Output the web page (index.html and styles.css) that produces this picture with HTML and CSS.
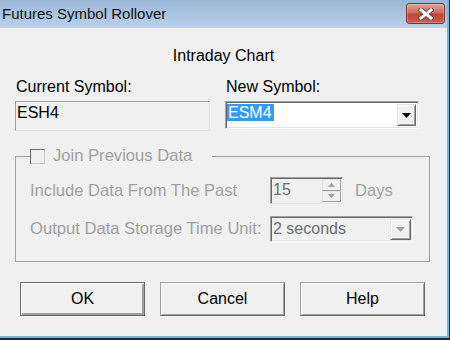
FILE: index.html
```html
<!DOCTYPE html>
<html lang="en">
    <head>
        <meta charset="UTF-8">
        <title>Futures Symbol Rollover</title>
        <link rel="stylesheet" href="styles.css">
    </head>
    <body>
        <div class="window">
            <div class="titlebar">
                <span class="title">Futures Symbol Rollover</span>
                <span class="close">
                    <svg width="16" height="12" viewBox="0 0 16 12">
                        <path d="M3 2 L13 10 M13 2 L3 10" stroke="#5b4646" stroke-width="5" stroke-linecap="square" fill="none"/>
                        <path d="M3 2 L13 10 M13 2 L3 10" stroke="#fff" stroke-width="3" stroke-linecap="square" fill="none"/>
                    </svg>
                </span>
            </div>
            <div class="dialog">
                <div class="heading">Intraday Chart</div>
                <div class="symbols">
                    <div class="field">
                        <div class="label">Current Symbol:</div>
                        <div class="readonly">ESH4</div>
                    </div>
                    <div class="field">
                        <div class="label">New Symbol:</div>
                        <div class="combo">
                            <span class="sel">ESM4</span>
                            <span class="drop">
                                <svg width="9" height="5" viewBox="0 0 9 5"><path d="M0 0 H9 L4.5 5 Z" fill="#000"/></svg>
                            </span>
                        </div>
                    </div>
                </div>
                <fieldset class="group">
                    <legend><span class="check"></span>Join Previous Data</legend>
                    <div class="row">
                        <span class="opt">Include Data From The Past</span>
                        <div class="spin">
                            <span class="val">15</span>
                            <span class="arrows">
                                <span class="arr">
                                    <svg width="7" height="4" viewBox="0 0 7 4"><path d="M0 4 H7 L3.5 0 Z" fill="#a0a0a0"/></svg>
                                </span>
                                <span class="arr">
                                    <svg width="7" height="4" viewBox="0 0 7 4"><path d="M0 0 H7 L3.5 4 Z" fill="#a0a0a0"/></svg>
                                </span>
                            </span>
                        </div>
                        <span class="opt days">Days</span>
                    </div>
                    <div class="row">
                        <span class="opt">Output Data Storage Time Unit:</span>
                        <div class="combo off">
                            <span class="val">2 seconds</span>
                            <span class="drop">
                                <svg width="9" height="5" viewBox="0 0 9 5"><path d="M0 0 H9 L4.5 5 Z" fill="#a0a0a0"/></svg>
                            </span>
                        </div>
                    </div>
                </fieldset>
                <div class="buttons">
                    <button class="btn default">OK</button>
                    <button class="btn">Cancel</button>
                    <button class="btn">Help</button>
                </div>
            </div>
        </div>
    </body>
</html>
```

FILE: styles.css
```css
*{
    margin: 0;
    padding: 0;
    box-sizing: border-box;
}
html, body{
    background: #262a2e;
}
body{
    font-family: "Liberation Sans", Arial, sans-serif;
    font-size: 16px;
    color: #000;
}
.window{
    width: 449px;
    height: 338px;
    background: #f0f0f0;
    border-right: 2px solid #5fbde9;
    border-bottom: 2px solid #5fbde9;
}
.titlebar{
    height: 28px;
    display: flex;
    align-items: center;
    justify-content: space-between;
    background: linear-gradient(#9ab6d6, #bad2eb);
    padding: 0 2px 1px 2px;
}
.title{
    font-size: 15px;
    color: #111;
}
.close{
    width: 39px;
    height: 21px;
    display: flex;
    align-items: center;
    justify-content: center;
    border: 1px solid #7d3430;
    border-radius: 3px;
    background: linear-gradient(#dca496 0%, #cf6c5c 45%, #c04634 55%, #c8614c 100%);
    box-shadow: inset 0 0 0 1px rgba(255,255,255,0.25);
}
.dialog{
    padding: 19px 0 0 15px;
}
.heading{
    line-height: 18px;
    text-align: center;
    padding-right: 15px;
}
.symbols{
    display: grid;
    grid-template-columns: 195px 194px;
    column-gap: 15px;
    margin-top: 13px;
    align-items: start;
}
.label{
    line-height: 18px;
    padding-left: 1px;
    margin-bottom: 5px;
}
.readonly{
    height: 30px;
    border: 1px solid;
    border-color: #a0a0a0 #e3e3e3 #e3e3e3 #a0a0a0;
    padding: 2px 0 0 1px;
    line-height: 18px;
}
.combo{
    height: 28px;
    background: #fff;
    border: 1px solid;
    border-color: #a0a0a0 #fff #fff #a0a0a0;
    box-shadow: inset 1px 1px #696969, inset -1px -1px #e3e3e3;
    display: flex;
    align-items: flex-start;
    padding: 2px 2px 2px 1px;
}
.sel{
    background: #3399ff;
    color: #fff;
    line-height: 17px;
    padding: 0 1px 0 1px;
    border-right: 1px solid #c87a3a;
}
.drop{
    margin-left: auto;
    width: 19px;
    height: 22px;
    display: flex;
    align-items: center;
    justify-content: center;
    background: #f0f0f0;
    border: 1px solid;
    border-color: #e3e3e3 #696969 #696969 #e3e3e3;
    box-shadow: inset 1px 1px #fff, inset -1px -1px #a0a0a0;
}
.group{
    width: 415px;
    margin-top: 17px;
    border: 1px solid #a0a0a0;
    padding: 13px 0 19px 14px;
    color: #a0a0a0;
    font-size: 16.6px;
}
.group legend{
    display: flex;
    align-items: center;
    height: 16px;
    padding-right: 20px;
}
.check{
    width: 15px;
    height: 15px;
    margin-right: 8px;
    border: 1px solid;
    border-color: #6d6d6d #c8c8c8 #c8c8c8 #6d6d6d;
    background: #f0f0f0;
}
.row{
    display: flex;
    align-items: center;
}
.row + .row{
    margin-top: 12px;
}
.opt{
    width: 240px;
    white-space: nowrap;
}
.opt.days{
    width: auto;
    margin-left: 12px;
}
.spin{
    width: 73px;
    height: 27px;
    display: flex;
    border: 1px solid;
    border-color: #a0a0a0 #e3e3e3 #e3e3e3 #a0a0a0;
    box-shadow: inset 1px 1px #696969;
    padding: 1px 1px 1px 2px;
}
.val{
    color: #6d6d6d;
    font-size: 16px;
    line-height: 18px;
    flex: 1;
}
.spin .val{
    padding-top: 2px;
}
.arrows{
    width: 19px;
    display: flex;
    flex-direction: column;
}
.arr{
    flex: 1;
    display: flex;
    align-items: center;
    justify-content: center;
    border: 1px solid;
    border-color: #e3e3e3 #a0a0a0 #a0a0a0 #e3e3e3;
    background: #f0f0f0;
}
.combo.off{
    width: 143px;
    height: 26px;
    background: #f0f0f0;
    padding: 1px 1px 1px 2px;
    align-items: center;
}
.combo.off .drop{
    width: 21px;
    height: 21px;
}
.buttons{
    display: flex;
    gap: 15px;
    margin: 20px 0 0 5px;
}
.btn{
    width: 125px;
    height: 34px;
    font-family: "Liberation Sans", Arial, sans-serif;
    font-size: 16px;
    color: #000;
    background: #f0f0f0;
    border: 1px solid;
    border-color: #a0a0a0 #696969 #696969 #a0a0a0;
    box-shadow: inset 1px 1px #fff, inset -1px -1px #a0a0a0;
}
.btn.default{
    border-color: #696969;
    box-shadow: inset 1px 1px #fff, inset -2px -2px #a0a0a0;
}
```
